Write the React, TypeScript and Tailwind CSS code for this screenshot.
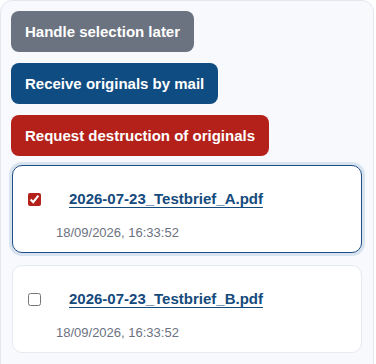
import React, { useState } from 'react';

interface Doc {
    id: number;
    name: string;
    date: string;
}

const docs: Doc[] = [
    { id: 1, name: '2026-07-23_Testbrief_A.pdf', date: '18/09/2026, 16:33:52' },
    { id: 2, name: '2026-07-23_Testbrief_B.pdf', date: '18/09/2026, 16:33:52' },
];

export default function App() {
    const [selected, setSelected] = useState<number[]>([1]);

    const toggle = (id: number) => {
        setSelected((s) => (s.includes(id) ? s.filter((x) => x !== id) : [...s, id]));
    };

    return (
        <div className="font-['Liberation_Sans',Arial,sans-serif] w-[374px] h-[364px] overflow-hidden">
            <div className="h-[380px] bg-[#f7f9fd] border border-[#e3e8ef] rounded-xl px-[10px] pt-[10px]">
                <div className="flex flex-col items-start gap-[11px]">
                    <button className="bg-[#6b7280] text-white font-bold text-[15px] leading-[17px] px-[14px] py-3 rounded-lg">Handle selection later</button>
                    <button className="bg-[#0f4c81] text-white font-bold text-[15px] leading-[17px] px-[14px] py-3 rounded-lg">Receive originals by mail</button>
                    <button className="bg-[#b3211a] text-white font-bold text-[15px] leading-[17px] px-[14px] py-3 rounded-lg">Request destruction of originals</button>
                </div>

                <div className="mt-[9px] flex flex-col gap-3 pl-[1px] pr-[1px]">
                    {docs.map((d) => {
                        const on = selected.includes(d.id);
                        return (
                            <div
                                key={d.id}
                                className={
                                    on
                                        ? 'bg-white rounded-[10px] border border-[#1f4f86] ring-[3px] ring-[#d8e3f0] pl-[15px] pr-4 pt-[24px] pb-[12px]'
                                        : 'bg-white rounded-[10px] border border-[#e5e9f0] pl-[15px] pr-4 pt-[24px] pb-[12px]'
                                }
                            >
                                <div className="flex items-start">
                                    <input
                                        type="checkbox"
                                        checked={on}
                                        onChange={() => toggle(d.id)}
                                        className="w-[13px] h-[13px] mt-[3px] m-0 accent-[#b3211a]"
                                    />
                                    <div className="ml-[15px] flex flex-col">
                                        <a href="#" className="ml-[13px] text-[15px] leading-[17px] font-bold text-[#154a7d] underline underline-offset-[3px]">{d.name}</a>
                                        <div className="mt-[18px] text-[13px] leading-[15px] text-[#6b7280]">{d.date}</div>
                                    </div>
                                </div>
                            </div>
                        );
                    })}
                </div>
            </div>
        </div>
    );
}
